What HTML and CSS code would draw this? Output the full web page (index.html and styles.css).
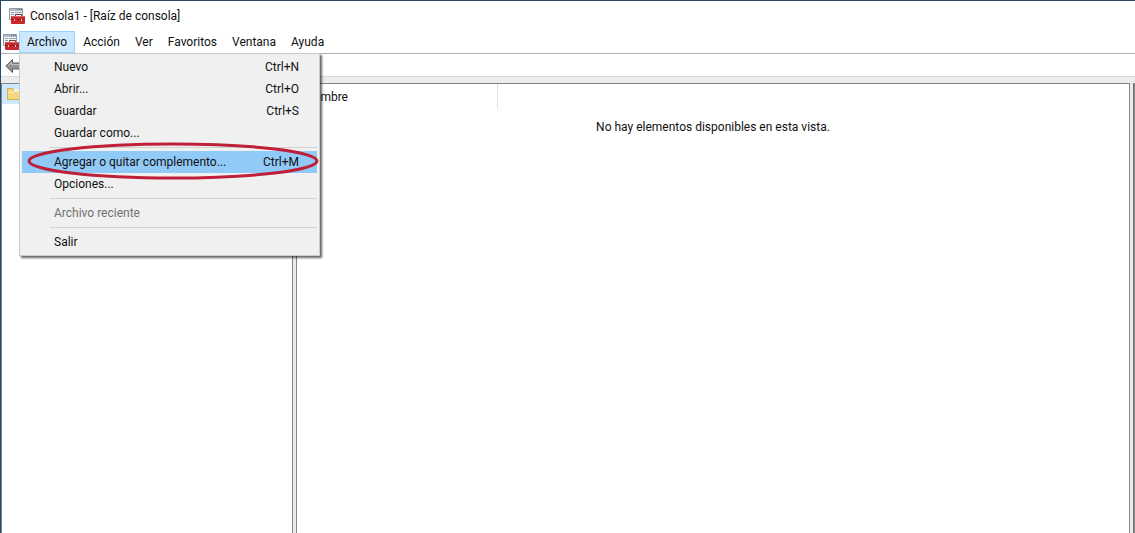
FILE: index.html
```
<!DOCTYPE html>
<html lang="es">
<head>
<meta charset="utf-8">
<title>Consola1 - [Raíz de consola]</title>
<link rel="stylesheet" href="styles.css">
</head>
<body>
<svg class="defs" aria-hidden="true">
  <symbol id="console" viewBox="0 0 16 16">
    <path d="M.5.5h13v11H.5z" fill="#f0f3f6" stroke="#8f9aa6"/>
    <path d="M1 1h12v2H1z" fill="#b4bdc7"/>
    <path d="M8 1.500h1M10 1.500h1M12 1.500h1" stroke="#56636f"/>
    <path d="M2 4.500h3M6 4.500h7M2 6.500h3M2 8.500h2" stroke="#96a4b2"/>
    <path d="M6.500 8.500v-2h6v2" fill="none" stroke="#7d3538"/>
    <rect x="2" y="8" width="14" height="8" rx="1" fill="#c8282c"/>
    <path d="M3 8.500h12" stroke="#dd6163"/>
    <path d="M2 11.500h14" stroke="#961d22"/>
    <path d="M5 11h1v2H5zM12 11h1v2h-1z" fill="#efc9c9"/>
  </symbol>
</svg>
<div class="window">
  <header class="titlebar">
    <svg class="icon"><use href="#console"/></svg>
    <h1 class="title">Consola1 - [Raíz de consola]</h1>
  </header>
  <nav class="menubar">
    <svg class="icon"><use href="#console"/></svg>
    <div class="menus">
      <div class="menu-anchor">
        <button class="menu-button open" type="button" aria-expanded="true">Archivo</button>
        <div class="dropdown">
          <button class="item" type="button"><span>Nuevo</span><span>Ctrl+N</span></button>
          <button class="item" type="button"><span>Abrir...</span><span>Ctrl+O</span></button>
          <button class="item" type="button"><span>Guardar</span><span>Ctrl+S</span></button>
          <button class="item" type="button"><span>Guardar como...</span></button>
          <hr class="separator">
          <button class="item selected" type="button"><span>Agregar o quitar complemento...</span><span>Ctrl+M</span>
            <svg class="marker" viewBox="0 0 292 38" preserveAspectRatio="none" aria-hidden="true"><ellipse cx="146" cy="19" rx="144" ry="17"/></svg>
          </button>
          <button class="item" type="button"><span>Opciones...</span></button>
          <hr class="separator">
          <button class="item" type="button" disabled><span>Archivo reciente</span></button>
          <hr class="separator">
          <button class="item" type="button"><span>Salir</span></button>
        </div>
      </div>
      <button class="menu-button" type="button">Acción</button>
      <button class="menu-button" type="button">Ver</button>
      <button class="menu-button" type="button">Favoritos</button>
      <button class="menu-button" type="button">Ventana</button>
      <button class="menu-button" type="button">Ayuda</button>
    </div>
  </nav>
  <div class="toolbar">
    <button class="tool" type="button" aria-label="Atrás">
      <svg class="icon" viewBox="0 0 16 16"><path d="M.8 8 7.500 1.500V5H15.500v6H7.500v3.500z" fill="#929292" stroke="#5e5e5e"/><path d="M3 8l3.500-3.500V6.500h8" fill="none" stroke="#c4c4c4"/></svg>
    </button>
  </div>
  <main class="workspace">
    <aside class="tree">
      <button class="node" type="button" aria-label="Raíz de consola">
        <svg class="icon" viewBox="0 0 16 16"><path d="M1.500 13.500v-11h5l1.500 2h7.500v9z" fill="#f5d77f" stroke="#d9af48"/><path d="M8 3.500h7v2H8z" fill="#fff8df"/><path d="M2 6.500h6l1-1h6" fill="none" stroke="#fdecae"/></svg>
      </button>
    </aside>
    <section class="list">
      <div class="columns"><div class="column">Nombre</div></div>
      <p class="empty">No hay elementos disponibles en esta vista.</p>
    </section>
    <div class="actions"></div>
  </main>
</div>
</body>
</html>
```
FILE: styles.css
```
* { box-sizing: border-box; }
body {
  margin: 0;
  font: 12px/22px "Segoe UI", Roboto, sans-serif;
  color: #111;
}
button {
  margin: 0;
  padding: 0;
  border: 0;
  background: none;
  font: inherit;
  color: inherit;
}
.defs { position: absolute; width: 0; height: 0; }
.icon { display: block; flex: none; width: 16px; height: 16px; }
.window {
  display: flex;
  flex-direction: column;
  min-height: 100vh;
  border-top: 1px solid #294a66;
  border-left: 1px solid #294a66;
  background: #fff;
}
.titlebar {
  display: flex;
  align-items: center;
  gap: 5px;
  height: 30px;
  padding-left: 8px;
}
.title { margin: 0; font-size: 12px; font-weight: 400; }
.menubar {
  display: flex;
  align-items: center;
  height: 23px;
  padding-left: 2px;
  border-bottom: 1px solid #b2b2b2;
}
.menus { display: flex; gap: 1px; }
.menu-anchor { position: relative; }
.menu-button { height: 22px; padding: 0 7px; line-height: 20px; }
.open {
  display: block;
  border: 1px solid #99d1ff;
  background: #cce8ff;
}
.dropdown {
  position: absolute;
  top: 22px;
  left: 0;
  z-index: 2;
  width: 301px;
  padding: 2px;
  border: 1px solid #ccc;
  background: #f0f0f0;
  box-shadow: 2px 2px 2px #00000099;
}
.item {
  position: relative;
  display: flex;
  justify-content: space-between;
  width: 100%;
  padding: 0 18px 0 32px;
  text-align: left;
}
.item:disabled { color: #707070; }
.selected { background: #91c9f7; }
.separator {
  height: 1px;
  margin: 3px 0 3px 28px;
  border: 0;
  background: #d2d2d2;
}
.marker {
  position: absolute;
  top: -9px;
  left: 5px;
  z-index: 1;
  width: 292px;
  height: 38px;
}
.marker ellipse { fill: none; stroke: #bd2038; stroke-width: 3; }
.toolbar {
  height: 23px;
  padding: 4px;
  border-bottom: 1px solid #d8d8d8;
}
.tool { display: block; }
.workspace {
  flex: 1;
  display: flex;
  padding-top: 6px;
  background: #ececee;
}
.tree, .list { border: 1px solid #82858c; border-bottom: 0; background: #fff; }
.tree { width: 292px; margin-right: 3px; }
.node { display: block; padding: 2px 4px; background: #cce8ff; }
.list { flex: 1; }
.columns { display: flex; }
.column {
  width: 201px;
  height: 25px;
  padding-left: 8px;
  border-right: 1px solid #e0e0e0;
  line-height: 27px;
}
.empty { margin: 7px 0 0; text-align: center; }
.actions { width: 2px; margin-left: 3px; border-left: 1px solid #6d6f70; background: #8a8b88; }
```
